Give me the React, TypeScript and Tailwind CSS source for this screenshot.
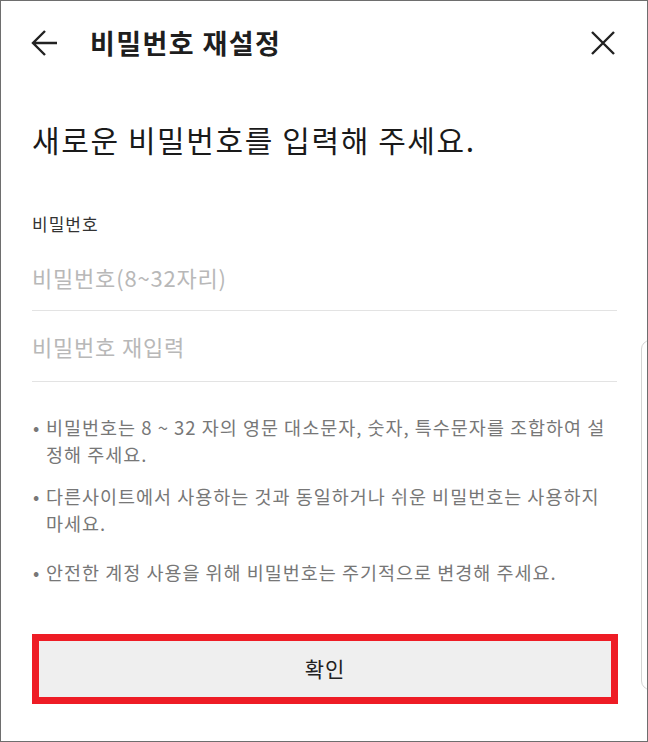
import React from 'react';

const font = { fontFamily: '"Noto Sans CJK KR", "Noto Sans", sans-serif' };

const notes = [
  ['비밀번호는 8 ~ 32 자의 영문 대소문자, 숫자, 특수문자를 조합하여 설', '정해 주세요.'],
  ['다른사이트에서 사용하는 것과 동일하거나 쉬운 비밀번호는 사용하지', '마세요.'],
  ['안전한 계정 사용을 위해 비밀번호는 주기적으로 변경해 주세요.'],
];

const App = () => {
  return (
    <div
      className="relative w-[648px] h-[742px] overflow-hidden bg-white border border-[#6e6e6e]"
      style={font}
    >
      {/* Header */}
      <div className="flex h-[83px] items-center pl-[30px] pr-[30px]">
        <svg width="26" height="26" viewBox="0 0 26 26" fill="none" stroke="#222" strokeWidth="2.4">
          <path d="M2 13H26M14 1L2 13L14 25" />
        </svg>
        <h1 className="ml-[33px] text-[27px] leading-[34px] font-bold text-[#1e1e1e] tracking-[1.4px]">
          비밀번호 재설정
        </h1>
        <svg className="ml-auto mr-[1px]" width="26" height="26" viewBox="0 0 26 26" fill="none" stroke="#222" strokeWidth="2.4">
          <path d="M2 2L24 24M24 2L2 24" />
        </svg>
      </div>

      <div className="px-[31px]">
        {/* Heading */}
        <h2 className="mt-[35px] text-[30px] leading-[40px] font-normal text-[#1a1a1a] tracking-[1.6px]">
          새로운 비밀번호를 입력해 주세요.
        </h2>

        {/* Password fields */}
        <div className="mt-[53px] text-[17px] leading-[24px] text-[#333] tracking-[1px]">비밀번호</div>
        <div className="flex h-[75px] items-end pb-[18px] border-b border-[#e3e3e3] mr-[-1px]">
          <span className="text-[22px] leading-[30px] text-[#b8b8b8] tracking-[0.8px]">비밀번호(8~32자리)</span>
        </div>
        <div className="flex h-[71px] items-end pb-[20px] border-b border-[#e3e3e3] mr-[-1px]">
          <span className="text-[22px] leading-[30px] text-[#b8b8b8] tracking-[0.8px]">비밀번호 재입력</span>
        </div>

        {/* Notes */}
        <ul className="mt-[32px] text-[18.5px] leading-[27px] text-[#777] tracking-[1px]">
          {notes.map((lines, i) => (
            <li key={i} className={`flex ${i === 1 ? 'mt-[15px]' : ''} ${i === 2 ? 'mt-[22px]' : ''}`}>
              <span className="w-[14px] shrink-0 pl-[1px]">•</span>
              <span className="whitespace-nowrap">
                {lines.map((l, j) => (
                  <React.Fragment key={j}>
                    {j > 0 && <br />}
                    {l}
                  </React.Fragment>
                ))}
              </span>
            </li>
          ))}
        </ul>

        {/* Confirm button */}
        <button className="mt-[48px] flex h-[70px] w-[586px] items-center justify-center border-[7px] border-[#ee1c25] bg-[#efefef] text-[21px] text-[#222] tracking-[1px]">
          확인
        </button>
      </div>

      {/* Edge panel handle */}
      <div className="absolute left-[640px] top-[339px] h-[350px] w-[10px] rounded-l-[9px] border border-[#d4d4d4]" />
    </div>
  );
};

export default App;
